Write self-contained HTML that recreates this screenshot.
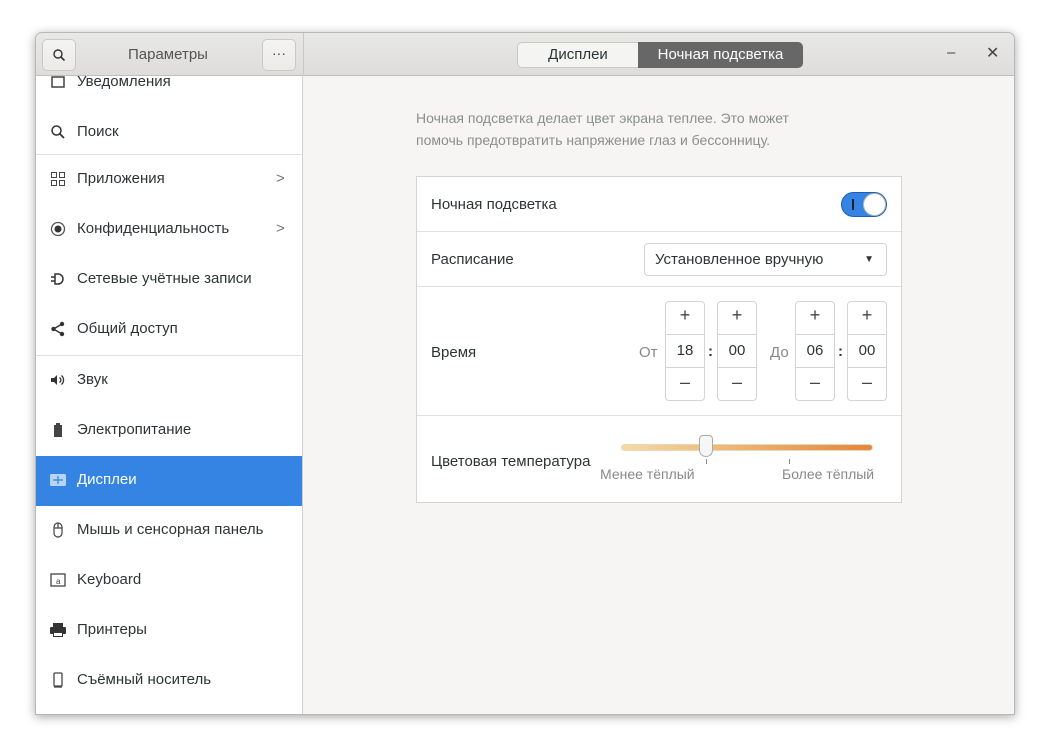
<!DOCTYPE html>
<html><head><meta charset="utf-8"><style>
*{box-sizing:border-box;margin:0;padding:0}
body{width:1050px;height:753px;background:#fff;font-family:"Liberation Sans","DejaVu Sans",sans-serif;position:relative;overflow:hidden;color:#2e3436}
.win{position:absolute;left:35px;top:32px;width:980px;height:683px;border:1px solid #b8b8b8;border-radius:7px 7px 0 0;box-shadow:0 2px 10px rgba(0,0,0,.35);overflow:hidden;background:#f6f5f4}
.hdr{position:absolute;left:0;top:0;width:980px;height:43px;background:linear-gradient(#e8e8e7,#dedddc);border-bottom:1px solid #c0bfbc}
.side{position:absolute;left:0;top:43px;width:267px;height:640px;background:#fff;border-right:1px solid #cfcfcd;overflow:hidden}
.vsep{position:absolute;left:267px;top:0;width:1px;height:43px;background:#c8c7c4}
.btn{position:absolute;top:6px;width:34px;height:32px;border:1px solid #cdc7c2;border-radius:5px;background:linear-gradient(#f4f4f3,#ebeae9);text-align:center;line-height:30px;font-size:14px;color:#444}
.row{position:absolute;left:0;width:267px;height:50px;font-size:15px;line-height:47px;color:#2e3436}
.row .t{position:absolute;left:41px}
.row .ic{position:absolute;left:14px;top:16px;width:16px;height:16px}
.row.sel{background:#3584e4;color:#fff}
.sep{position:absolute;left:0;width:267px;height:1px;background:#e0e0e0}
.chev{position:absolute;left:240px;top:0;color:#777;font-size:15px}
.card{position:absolute;left:380px;top:143px;width:486px;height:327px;background:#fff;border:1px solid #d6d4d1}
.cr{position:absolute;left:0;width:484px;border-bottom:1px solid #e3e1de}
.lab{position:absolute;left:14px;font-size:15px;color:#2e3436}
.spin{position:absolute;width:40px;height:100px;border:1px solid #d6d4d1;border-radius:4px;background:#fff}
.spin .m{position:absolute;left:-1px;top:32px;width:40px;height:34px;border:1px solid #d6d4d1;text-align:center;line-height:32px;font-size:15px}
.spin .p,.spin .n{position:absolute;left:0;width:38px;text-align:center;font-size:18px;color:#444;font-weight:300}
</style></head><body>
<div class="win">
<div class="hdr">
 <div class="btn" style="left:6px"><svg width="14" height="14" viewBox="0 0 14 14" style="margin-top:8px"><circle cx="6" cy="6" r="4" fill="none" stroke="#333" stroke-width="1.4"/><path d="M9 9l3.5 3.5" stroke="#333" stroke-width="1.6"/></svg></div>
 <div style="position:absolute;left:92px;top:13px;font-size:15px;color:#555">Параметры</div>
 <div class="btn" style="left:226px;line-height:26px">···</div>
 <div class="vsep"></div>
 <div style="position:absolute;left:481px;top:9px;width:121px;height:26px;border:1px solid #cdc7c2;border-right:none;border-radius:5px 0 0 5px;background:#f4f4f3;text-align:center;line-height:24px;font-size:15px;color:#2e3436">Дисплеи</div>
 <div style="position:absolute;left:602px;top:9px;width:165px;height:26px;border-radius:0 5px 5px 0;background:#676767;text-align:center;line-height:26px;font-size:15px;color:#fff">Ночная подсветка</div>
 <div style="position:absolute;left:911px;top:11px;font-size:15px;color:#444">–</div>
 <div style="position:absolute;left:950px;top:10px;font-size:16px;color:#444">✕</div>
</div>
<div class="side">
 <div class="row" style="top:-18px"><svg class="ic" viewBox="0 0 16 16"><rect x="2" y="3" width="12" height="10" fill="none" stroke="#444" stroke-width="1.5"/></svg><span class="t">Уведомления</span></div>
 <div class="row" style="top:32px"><svg class="ic" viewBox="0 0 16 16"><circle cx="6.5" cy="6.5" r="4.5" fill="none" stroke="#333" stroke-width="1.5"/><path d="M10 10l4 4" stroke="#333" stroke-width="1.8"/></svg><span class="t">Поиск</span></div>
 <div class="sep" style="top:78px"></div>
 <div class="row" style="top:79px"><svg class="ic" viewBox="0 0 16 16" fill="none" stroke="#444"><rect x="1.5" y="1.5" width="5" height="5"/><rect x="9.5" y="1.5" width="5" height="5"/><rect x="1.5" y="9.5" width="5" height="5"/><rect x="9.5" y="9.5" width="5" height="5"/></svg><span class="t">Приложения</span><span class="chev">&gt;</span></div>
 <div class="row" style="top:129px"><svg class="ic" viewBox="0 0 16 16"><circle cx="8" cy="8" r="6.5" fill="none" stroke="#555" stroke-width="1.3"/><circle cx="8" cy="8" r="3.5" fill="#333"/></svg><span class="t">Конфиденциальность</span><span class="chev">&gt;</span></div>
 <div class="row" style="top:179px"><svg class="ic" viewBox="0 0 16 16"><path d="M1 6h4M1 10h4M5 3h3a5 5 0 010 10H5z" fill="none" stroke="#333" stroke-width="1.5"/></svg><span class="t">Сетевые учётные записи</span></div>
 <div class="row" style="top:229px"><svg class="ic" viewBox="0 0 16 16"><circle cx="12" cy="3" r="2.2" fill="#333"/><circle cx="12" cy="13" r="2.2" fill="#333"/><circle cx="3.5" cy="8" r="2.2" fill="#333"/><path d="M12 3L3.5 8 12 13" stroke="#333" stroke-width="1.4" fill="none"/></svg><span class="t">Общий доступ</span></div>
 <div class="sep" style="top:279px"></div>
 <div class="row" style="top:280px"><svg class="ic" viewBox="0 0 16 16"><path d="M1 6h3l3-3v10l-3-3H1z" fill="#333"/><path d="M9.5 5.5a3 3 0 010 5M11.5 3.5a6 6 0 010 9" fill="none" stroke="#333" stroke-width="1.3"/></svg><span class="t">Звук</span></div>
 <div class="row" style="top:330px"><svg class="ic" viewBox="0 0 16 16"><rect x="4" y="3" width="8" height="12" fill="#444"/><rect x="6" y="1" width="4" height="2" fill="#444"/></svg><span class="t">Электропитание</span></div>
 <div class="row sel" style="top:380px"><svg class="ic" viewBox="0 0 16 16"><rect x="0" y="2" width="16" height="12" rx="1.5" fill="#b8d5f6"/><path d="M3 8h10M8 4v8" stroke="#3584e4" stroke-width="1.3"/></svg><span class="t">Дисплеи</span></div>
 <div class="row" style="top:430px"><svg class="ic" viewBox="0 0 16 16"><rect x="4" y="1" width="8" height="14" rx="4" fill="none" stroke="#444" stroke-width="1.2"/><path d="M4 6h8M8 1v5" stroke="#444" stroke-width="1.2"/></svg><span class="t">Мышь и сенсорная панель</span></div>
 <div class="row" style="top:480px"><svg class="ic" viewBox="0 0 16 16"><rect x="1" y="2" width="14" height="12" fill="none" stroke="#444" stroke-width="1.3"/><text x="6" y="12" font-size="8" fill="#444" font-family="Liberation Sans">a</text></svg><span class="t">Keyboard</span></div>
 <div class="row" style="top:530px"><svg class="ic" viewBox="0 0 16 16"><rect x="0" y="5" width="16" height="7" rx="1" fill="#333"/><rect x="3" y="1" width="10" height="4" fill="#333"/><rect x="3" y="10" width="10" height="5" fill="#333"/><rect x="4" y="11" width="8" height="3" fill="#fff"/></svg><span class="t">Принтеры</span></div>
 <div class="row" style="top:580px"><svg class="ic" viewBox="0 0 16 16"><rect x="4" y="1" width="8" height="13" rx="1" fill="none" stroke="#444" stroke-width="1.3"/><path d="M4 15h8" stroke="#444" stroke-width="1.3"/></svg><span class="t">Съёмный носитель</span></div>
</div>
<div style="position:absolute;left:380px;top:74px;font-size:14px;line-height:22px;color:#8b8e8f">Ночная подсветка делает цвет экрана теплее. Это может<br>помочь предотвратить напряжение глаз и бессонницу.</div>
<div class="card">
 <div class="cr" style="top:0;height:55px"><span class="lab" style="top:19px">Ночная подсветка</span>
  <div style="position:absolute;left:424px;top:15px;width:46px;height:25px;border-radius:13px;background:#3584e4;border:1px solid #1c5fb0"><div style="position:absolute;left:10px;top:6px;width:2px;height:11px;background:#222"></div><div style="position:absolute;right:0;top:0;width:23px;height:23px;border-radius:50%;background:#fff;border:1px solid #bbb"></div></div></div>
 <div class="cr" style="top:55px;height:55px"><span class="lab" style="top:19px">Расписание</span>
  <div style="position:absolute;left:227px;top:11px;width:243px;height:33px;border:1px solid #d6d4d1;border-radius:4px;font-size:15px;line-height:31px;padding-left:10px">Установленное вручную<span style="position:absolute;right:12px;top:0;font-size:10px;color:#333">▼</span></div></div>
 <div class="cr" style="top:110px;height:129px"><span class="lab" style="top:57px">Время</span>
  <span style="position:absolute;left:222px;top:57px;color:#888;font-size:15px">От</span>
  <span style="position:absolute;left:353px;top:57px;color:#888;font-size:15px">До</span>
  <span style="position:absolute;left:291px;top:56px;font-size:15px;font-weight:bold">:</span>
  <span style="position:absolute;left:421px;top:56px;font-size:15px;font-weight:bold">:</span>
  <div class="spin" style="left:248px;top:14px"><div class="p" style="top:3px">+</div><div class="m">18</div><div class="n" style="top:70px">–</div></div>
  <div class="spin" style="left:300px;top:14px"><div class="p" style="top:3px">+</div><div class="m">00</div><div class="n" style="top:70px">–</div></div>
  <div class="spin" style="left:378px;top:14px"><div class="p" style="top:3px">+</div><div class="m">06</div><div class="n" style="top:70px">–</div></div>
  <div class="spin" style="left:430px;top:14px"><div class="p" style="top:3px">+</div><div class="m">00</div><div class="n" style="top:70px">–</div></div>
 </div>
 <div style="position:absolute;top:239px;left:0;width:484px;height:87px">
  <span class="lab" style="top:37px">Цветовая температура</span>
  <div style="position:absolute;left:204px;top:28px;width:252px;height:7px;border-radius:4px;background:linear-gradient(90deg,#f8d8aa,#f0b878 40%,#e8843c);border:1px solid #ddb"></div>
  <div style="position:absolute;left:282px;top:19px;width:14px;height:22px;border:1px solid #aaa;border-radius:4px 4px 7px 7px;background:#f6f6f6"></div>
  <div style="position:absolute;left:289px;top:43px;width:1px;height:5px;background:#888"></div>
  <div style="position:absolute;left:372px;top:43px;width:1px;height:5px;background:#888"></div>
  <span style="position:absolute;left:183px;top:50px;font-size:14px;color:#888">Менее тёплый</span>
  <span style="position:absolute;left:365px;top:50px;font-size:14px;color:#888">Более тёплый</span>
 </div>
</div>
</div>
</body></html>
